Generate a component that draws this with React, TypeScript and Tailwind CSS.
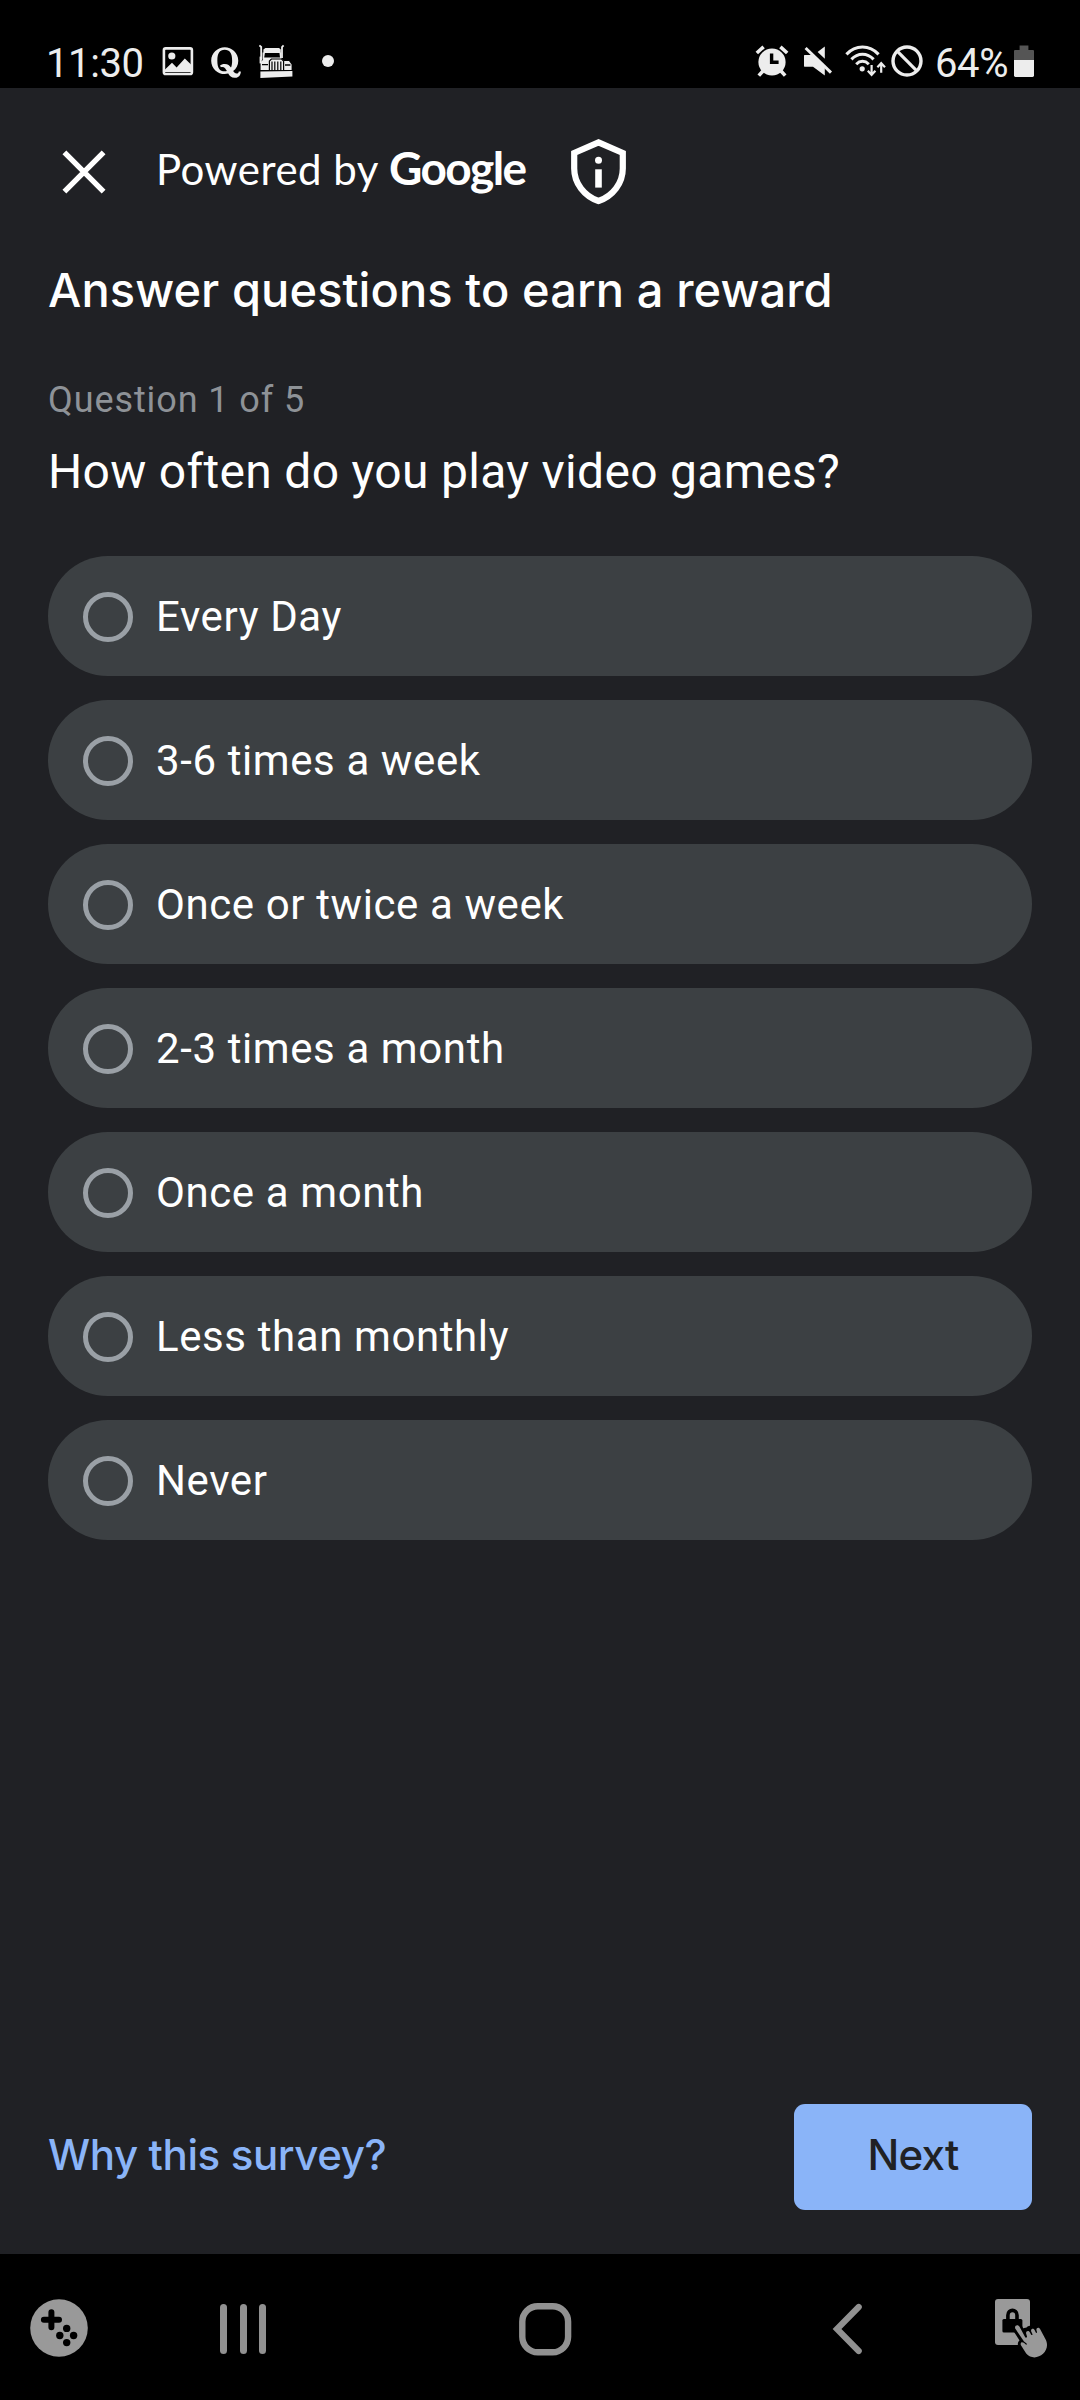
import { FaQuora } from "react-icons/fa";

const OPTIONS = [
  "Every Day",
  "3-6 times a week",
  "Once or twice a week",
  "2-3 times a month",
  "Once a month",
  "Less than monthly",
  "Never",
];

function PictureIcon() {
  return (
    <svg className="h-9 w-[32px] shrink-0" viewBox="0 0 32 36" fill="none">
      <rect x="1.9" y="4.4" width="28" height="25.6" rx="1.8" stroke="#ededed" strokeWidth="2.6" />
      <circle cx="9.8" cy="12" r="3.6" fill="#ededed" />
      <path d="M3 28V25.5L10 18.8L14.6 23.6L22.8 14.4L29 20.6V28Z" fill="#ededed" />
    </svg>
  );
}

function TruckIcon() {
  return (
    <svg className="h-9 w-[34px] shrink-0" viewBox="0 0 34 36" fill="none">
      <path d="M.4 1.4L2.2 3V16M24.6 1.4L23 3V14" stroke="#ededed" strokeWidth="1.8" />
      <path d="M4.4 9V5.6L6.4 4H20L21.8 5.6V9Z" fill="#ededed" />
      <path d="M3.6 8.4H6L5.2 13.4H21L20.4 8.4H22.4V14.4L25 17H30L32.6 20.4V26H1.6V18.6L4.2 15.4H3.6Z" fill="#ededed" />
      <path d="M.6 12.6V19.4H2.8V12.6Z" fill="#ededed" />
      <path d="M10.4 26.4V17L12.4 15H22.6L24.6 17V26.4" fill="#ededed" stroke="#000" strokeWidth="1.2" />
      <path d="M13 17.4V26.4M15.8 17.4V26.4M18.8 17.4V26.4M21.8 17.4V26.4" stroke="#000" strokeWidth="1.2" />
      <path d="M3 20.6H9M26 21H31.4" stroke="#000" strokeWidth="1.4" />
      <path d="M1.4 26.6H33" stroke="#000" strokeWidth="1" />
      <path d="M1.4 27.4L33.4 27V32.6L1.4 34Z" fill="#ededed" />
    </svg>
  );
}

function AlarmIcon() {
  return (
    <svg className="h-9 w-[34px] shrink-0" viewBox="0 0 34 36" fill="none">
      <path d="M1.8 9L8.6 2.8M32.2 9L25.4 2.8" stroke="#ededed" strokeWidth="3.6" />
      <path d="M8 27L3.8 31.6M26 27L30.2 31.6" stroke="#ededed" strokeWidth="3.6" />
      <circle cx="17" cy="18" r="13.6" fill="#ededed" />
      <path d="M16.6 9.6V18.2H23.6" stroke="#000" strokeWidth="3.4" />
    </svg>
  );
}

function MuteIcon() {
  return (
    <svg className="h-9 w-[30px] shrink-0" viewBox="0 0 30 36" fill="none">
      <path d="M1.6 11H8.8L21.8 23.4V31.6L10 22.8H1.6Q1 22.8 1 22V11.8Q1 11 1.6 11Z" fill="#ededed" />
      <path d="M21.8 2.4V14.8L14.6 8Z" fill="#ededed" />
      <path d="M2.6 4L28 28.6" stroke="#ededed" strokeWidth="3" />
    </svg>
  );
}

function WifiIcon() {
  return (
    <svg className="h-9 w-[41px] shrink-0" viewBox="0 0 41 36" fill="none">
      <g stroke="#ededed" strokeWidth="3">
        <path d="M1.4 10.4C10.6.6 24.4.6 33.6 10.4" />
        <path d="M6.4 15.4C12.8 8.6 22.2 8.6 28.6 15.4" />
        <path d="M11.2 20.2C15 16.4 20 16.4 23.8 20.2" />
      </g>
      <circle cx="17.2" cy="24.8" r="2.6" fill="#ededed" />
      <path d="M26.6 21V30.4M22.8 26.8L26.6 30.8L30.4 26.8" stroke="#ededed" strokeWidth="2.2" />
      <path d="M36.2 28.8V19.6M32.4 23.2L36.2 19.2L40 23.2" stroke="#ededed" strokeWidth="2.2" />
    </svg>
  );
}

function BlockedIcon() {
  return (
    <svg className="h-9 w-[32px] shrink-0" viewBox="0 0 32 36" fill="none">
      <circle cx="16" cy="17" r="14" stroke="#ededed" strokeWidth="3.4" />
      <path d="M6.2 7.2L25.8 26.8" stroke="#ededed" strokeWidth="3.2" />
    </svg>
  );
}

function BatteryIcon() {
  return (
    <svg className="h-9 w-[20px] shrink-0" viewBox="0 0 20 36">
      <path d="M5.6 1.6H14.4V6H19Q20 6 20 7V16H0V7Q0 6 1 6H5.6Z" fill="#555" />
      <path d="M0 16H20V31.6Q20 33 18.6 33H1.4Q0 33 0 31.6Z" fill="#ededed" />
    </svg>
  );
}

function StatusBar() {
  return (
    <div className="flex h-[88px] items-start justify-between bg-black pt-[44px] pl-[46px] pr-[46px] font-['Roboto',sans-serif] text-[40px] leading-9 text-[#ededed]">
      <div className="flex">
        <span className="w-[116px] pt-[2px] tracking-[-0.4px]">11:30</span>
        <PictureIcon />
        <FaQuora className="mt-px ml-[16px] h-[35px] w-[32px] shrink-0" />
        <span className="ml-[17px] flex">
          <TruckIcon />
        </span>
        <span className="mt-[11px] ml-[29px] size-3 rounded-full bg-[#ededed]" />
      </div>
      <div className="flex">
        <AlarmIcon />
        <span className="ml-[14px] flex">
          <MuteIcon />
        </span>
        <span className="ml-[12px] flex">
          <WifiIcon />
        </span>
        <span className="ml-[5px] flex">
          <BlockedIcon />
        </span>
        <span className="ml-[12px] w-[79px] pt-[2px] tracking-[-0.4px]">64%</span>
        <BatteryIcon />
      </div>
    </div>
  );
}

function Header() {
  return (
    <header className="flex h-[168px] items-center pl-[62px] text-white">
      <button aria-label="Close">
        <svg className="h-[44px] w-[44px]" viewBox="0 0 44 44" fill="none">
          <path d="M2.4 2.4L41.6 41.6M41.6 2.4L2.4 41.6" stroke="#fff" strokeWidth="5.4" />
        </svg>
      </button>
      <p className="ml-[50px] flex w-[415px] items-baseline pb-[7px] font-['Lato',sans-serif] leading-[56px] whitespace-nowrap">
        <span className="w-[233px] text-[42px] tracking-[0.5px]">Powered by</span>
        <span className="text-[46px] font-bold tracking-[-1.6px]">Google</span>
      </p>
      <svg className="h-[68px] w-[56px]" viewBox="0 0 56 68" fill="none">
        <path
          d="M27.5 4.4L51.8 15V30.4C51.8 45 42 58 27.5 63C13 58 3.2 45 3.2 30.4V15Z"
          stroke="#fff"
          strokeWidth="6.2"
        />
        <circle cx="27.5" cy="22.3" r="3.5" fill="#fff" />
        <path d="M27.5 31.3V49.6" stroke="#fff" strokeWidth="6.6" />
      </svg>
    </header>
  );
}

function NavBar() {
  return (
    <nav className="flex h-[146px] items-start bg-black pt-[44px]">
      <svg className="ml-[30px] h-[60px] w-[58px]" viewBox="30 2298 58 60">
        <circle cx="59" cy="2328" r="28.8" fill="#999" />
        <path d="M51.4 2312.2V2327.2M43.9 2319.8H59" stroke="#000" strokeWidth="6" strokeLinecap="round" />
        <circle cx="66.7" cy="2328.4" r="3.7" />
        <circle cx="59.8" cy="2335.5" r="3.7" />
        <circle cx="73.6" cy="2335.5" r="3.7" />
        <circle cx="66.7" cy="2342.6" r="3.7" />
      </svg>
      <div className="mt-[6px] ml-[132px] flex h-[50px] gap-[12.5px]">
        <span className="w-[7px] rounded-full bg-[#919191]" />
        <span className="w-[7px] rounded-full bg-[#919191]" />
        <span className="w-[7px] rounded-full bg-[#919191]" />
      </div>
      <svg className="ml-[253px] h-[60px] w-[53px]" viewBox="519 2298 53 60" fill="none">
        <rect x="522.3" y="2306.2" width="45.8" height="46" rx="15.5" stroke="#919191" strokeWidth="6.4" />
      </svg>
      <svg className="ml-[260px] h-[60px] w-[32px]" viewBox="832 2298 32 60" fill="none">
        <path d="M858.7 2307L837 2329L858.7 2351" stroke="#919191" strokeWidth="6.2" strokeLinecap="round" />
      </svg>
      <svg className="ml-[130px] h-[60px] w-[54px]" viewBox="14 8 54 60">
        <rect x="15" y="9" width="35" height="46" rx="3" fill="#999" />
        <path d="M27.9 31V25.2C27.9 18.8 37 18.8 37 25.2V31" fill="none" stroke="#000" strokeWidth="3.6" />
        <rect x="22.4" y="29" width="20" height="13.4" rx="1.5" />
        <path
          d="M35 38.5C34 35.5 37.8 34 39.5 37L44.4 46.2L44 42.6C43.8 40 47 39.6 48 42L49.6 44.6L48.6 40.8C48.4 38 51.6 37.8 52.4 40.2L54 43.2L53.4 39.6C53.8 36.6 57.6 37 58.6 39.4L65 49.2C72 62 55 73.6 46.2 63.6L40.6 54.8C40 51.6 43 51.4 45.4 54.4Z"
          stroke="#000"
          strokeWidth="5.4"
        />
        <path
          d="M35.2 38.5C34.2 35.5 38 34 39.7 37L45.2 47.2C45.8 48.2 47.4 47.4 47 46.4L46.2 43.8C45.4 41 48.6 40 49.8 42.2L51 44.6C51.6 45.6 52.8 45 52.4 44L51.2 41.4C50.4 38.8 53.4 37.8 54.6 40L55.8 42.6C56.4 43.4 57.2 42.8 57 42L56.4 40C56.2 37.2 59.2 37 60.2 39.2L65.4 49C72.4 62 55 73.6 46.2 63.6L40.8 55C40 51.6 43 51.4 45.8 54.6C46.6 55 47 54.4 46.6 53.6L44 51.4Z"
          fill="#999"
        />
      </svg>
    </nav>
  );
}

export default function App() {
  return (
    <div className="flex h-[2400px] w-[1080px] flex-col overflow-hidden bg-[#202125]">
      <StatusBar />
      <Header />
      <main className="flex flex-1 flex-col px-12 font-['Roboto',sans-serif]">
        <h1 className="font-['Inter',sans-serif] text-[47px] leading-[67px] font-medium tracking-[0.08px] text-white">
          Answer questions to earn a reward
        </h1>
        <p className="mt-[52px] text-[36px] leading-[50px] tracking-[0.9px] text-[#8e9297]">Question 1 of 5</p>
        <h2 className="mt-[17px] text-[48px] leading-[60px] tracking-[0.31px] text-white">
          How often do you play video games?
        </h2>
        <div className="mt-[54px] flex flex-col gap-6" role="radiogroup">
          {OPTIONS.map((option) => (
            <button
              key={option}
              role="radio"
              aria-checked="false"
              className="flex h-[120px] items-center rounded-full bg-[#3c4043] pl-[35px] text-left text-[42px] leading-[56px] tracking-[0.6px] text-white"
            >
              <span className="mt-px size-[50px] shrink-0 rounded-full border-[5px] border-[#9aa0a6]" />
              <span className="ml-[23px] pt-[2px]">{option}</span>
            </button>
          ))}
        </div>
        <div className="mt-auto mb-[44px] flex h-[106px] items-center justify-between font-['Inter',sans-serif] text-[42px] leading-[56px] font-medium">
          <a className="pb-[5px] tracking-[-0.38px] text-[#8ab4f8]">Why this survey?</a>
          <button className="h-full w-[238px] rounded-[11px] bg-[#8ab4f8] pb-[5px] tracking-[-0.8px] text-[#202124]">
            Next
          </button>
        </div>
      </main>
      <NavBar />
    </div>
  );
}
